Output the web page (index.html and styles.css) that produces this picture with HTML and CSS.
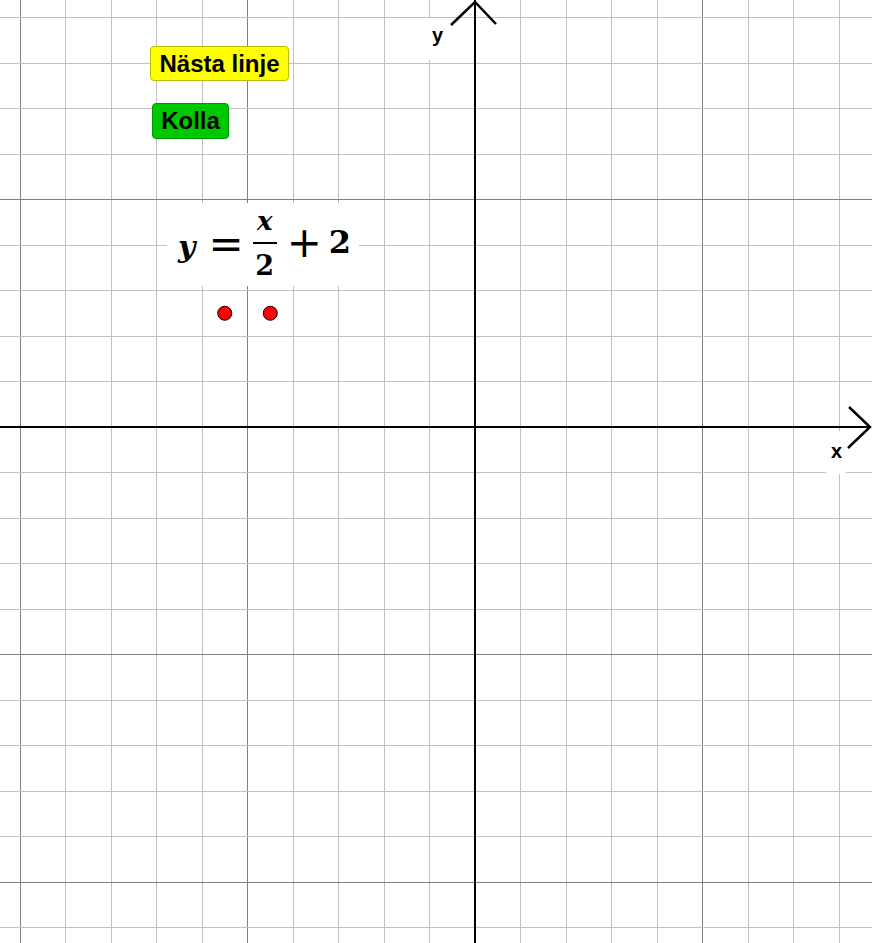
FILE: index.html
```html
<!DOCTYPE html>
<html lang="sv">
<head>
  <meta charset="UTF-8">
  <meta name="viewport" content="width=device-width, initial-scale=1.0">
  <title>Rita linjen</title>
  <link rel="stylesheet" href="styles.css">
</head>
<body>
  <div class="graph">
    <svg class="canvas" id="canvas" width="872" height="943" xmlns="http://www.w3.org/2000/svg">
      <g id="grid"></g>
      <g id="labels">
        <rect class="label-bg" x="423" y="18" width="27" height="42"></rect>
        <text class="axis-label" x="432" y="42">y</text>
        <rect class="label-bg" x="826" y="431" width="20" height="43"></rect>
        <text class="axis-label" x="831" y="458">x</text>
      </g>
      <g id="axes"></g>
      <g id="points"></g>
    </svg>

    <button class="btn btn-next">Nästa linje</button>
    <button class="btn btn-check">Kolla</button>

    <div class="formula">
      <span class="m-var m-y">y</span>
      <span class="m-op m-eq">=</span>
      <span class="frac">
        <span class="m-var frac-num">x</span>
        <span class="m-num frac-den">2</span>
      </span>
      <span class="m-op m-plus">+</span>
      <span class="m-num m-const">2</span>
    </div>
  </div>

  <script>
    const NS = 'http://www.w3.org/2000/svg';
    const W = 872, H = 943;
    const ox = 475, oy = 427;   // origin in px
    const unit = 45.5;          // px per unit, major line every 5

    function line(parent, x1, y1, x2, y2, cls) {
      const l = document.createElementNS(NS, 'line');
      l.setAttribute('x1', x1); l.setAttribute('y1', y1);
      l.setAttribute('x2', x2); l.setAttribute('y2', y2);
      l.setAttribute('class', cls);
      parent.appendChild(l);
    }

    const grid = document.getElementById('grid');
    for (let k = -11; k <= 9; k++) {
      if (k === 0) continue;
      const x = Math.floor(ox + k * unit) + 0.5;
      line(grid, x, 0, x, H, k % 5 === 0 ? 'major' : 'minor');
    }
    for (let k = -10; k <= 12; k++) {
      if (k === 0) continue;
      const y = Math.floor(oy + k * unit) + 0.5;
      line(grid, 0, y, W, y, k % 5 === 0 ? 'major' : 'minor');
    }

    const axes = document.getElementById('axes');
    line(axes, ox, 0, ox, H, 'axis');
    line(axes, 0, oy, W - 2, oy, 'axis');
    [[451, 25, ox, 2, 496, 24], [849, 407, 870, oy, 848, 448]].forEach(p => {
      const a = document.createElementNS(NS, 'polyline');
      a.setAttribute('points', `${p[0]},${p[1]} ${p[2]},${p[3]} ${p[4]},${p[5]}`);
      a.setAttribute('class', 'arrow');
      axes.appendChild(a);
    });

    // the two points the student has placed
    const pts = [[-5.5, 2.5], [-4.5, 2.5]];
    const g = document.getElementById('points');
    pts.forEach(([px, py]) => {
      const c = document.createElementNS(NS, 'circle');
      c.setAttribute('cx', ox + px * unit);
      c.setAttribute('cy', oy - py * unit);
      c.setAttribute('r', 7);
      c.setAttribute('class', 'point');
      g.appendChild(c);
    });
  </script>
</body>
</html>
```

FILE: styles.css
```css
body {
  margin: 0;
  padding: 0;
  background: #ffffff;
  overflow: hidden;
  font-family: 'Liberation Sans', Arial, sans-serif;
}
.graph {
  position: relative;
  width: 872px;
  height: 943px;
  overflow: hidden;
}
.canvas {
  display: block;
}
.minor {
  stroke: #c0c0c0;
  stroke-width: 1;
}
.major {
  stroke: #808080;
  stroke-width: 1;
}
.axis {
  stroke: #000000;
  stroke-width: 2;
}
.arrow {
  fill: none;
  stroke: #000000;
  stroke-width: 2.5;
}
.label-bg {
  fill: #ffffff;
}
.axis-label {
  font-family: 'Liberation Sans', Arial, sans-serif;
  font-weight: bold;
  font-size: 20px;
  fill: #000000;
}
.point {
  fill: #ff0000;
  stroke: #000000;
  stroke-width: 1;
}
.btn {
  position: absolute;
  margin: 0;
  padding: 0;
  font-family: 'Liberation Sans', Arial, sans-serif;
  font-weight: bold;
  font-size: 24px;
  color: #000000;
  border-radius: 4px;
  cursor: pointer;
  text-align: center;
  line-height: 1;
}
.btn-next {
  left: 150px;
  top: 46px;
  width: 139px;
  height: 35px;
  background: #ffff00;
  border: 1px solid #bebe00;
}
.btn-check {
  left: 152px;
  top: 103px;
  width: 77px;
  height: 36px;
  background: #00c800;
  border: 1px solid #009600;
}
.formula {
  position: absolute;
  left: 167px;
  top: 203px;
  width: 192px;
  height: 83px;
  box-sizing: border-box;
  padding-left: 11px;
  padding-bottom: 2px;
  background: #ffffff;
  display: flex;
  align-items: center;
  color: #000000;
  font-family: 'DejaVu Serif', 'Liberation Serif', serif;
  font-weight: bold;
}
.m-var {
  font-style: italic;
}
.m-y {
  font-size: 30px;
  margin-top: 6px;
}
.m-op {
  font-family: 'DejaVu Sans', sans-serif;
  font-weight: normal;
  font-size: 42px;
}
.m-eq {
  margin-left: 13px;
}
.frac {
  display: inline-flex;
  flex-direction: column;
  align-items: center;
  margin-left: 9px;
}
.frac-num {
  font-size: 26px;
  line-height: 26px;
  width: 24px;
  padding-bottom: 8px;
  text-align: center;
  border-bottom: 2px solid #000000;
}
.frac-den {
  font-size: 27px;
  line-height: 28px;
  padding-top: 8px;
}
.m-plus {
  margin-left: 10px;
  margin-top: -2px;
}
.m-const {
  font-size: 32px;
  margin-left: 7px;
  margin-top: -3px;
}
```
